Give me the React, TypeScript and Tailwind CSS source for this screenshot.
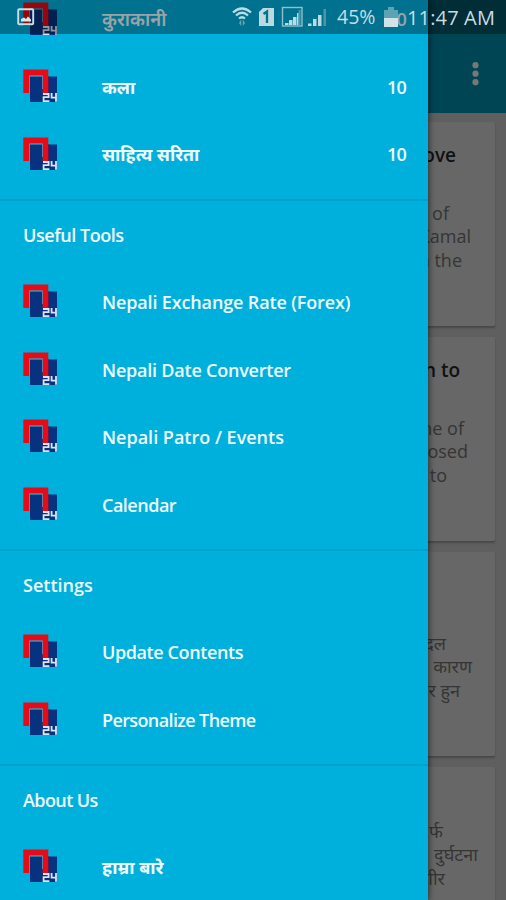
import React from "react";

const FONT = "font-['Open_Sans','Noto_Sans','Noto_Sans_Devanagari',sans-serif]";

function Logo() {
  return (
    <svg width="35" height="34" viewBox="0 0 35 34" className="shrink-0">
      <rect x="7" y="7.5" width="27" height="25.5" fill="#063280" />
      <rect x="25" y="7.5" width="1.4" height="16" fill="#2a2068" />
      <path d="M0.3 24V0.5H25.3V24.2H19.6V6.6H6.2V24Z" fill="#e80a14" />
      <path d="M6.5 24V6.9H19.5V20" fill="none" stroke="#6f84a8" strokeWidth="0.9" />
      <path d="M20 25H25.6V28.2H20.6V32.2H26.4M28.6 24V28.6H33.6M33 24V32.8" fill="none" stroke="#dfe3f6" strokeWidth="1.8" />
    </svg>
  );
}

type Item = { label: string; cls: string; count?: string };

function Row({ label, cls, count }: Item) {
  return (
    <div className="flex h-[67.5px] shrink-0 items-center pl-[23px] pr-[22px]">
      <Logo />
      <span className={`ml-[44px] whitespace-nowrap leading-6 ${cls}`}>{label}</span>
      {count && <span className="ml-auto pt-[2px] text-[18px] font-semibold tracking-[-0.8px]">{count}</span>}
    </div>
  );
}

function SectionTitle({ label, cls }: Item) {
  return (
    <div className="h-[80px] shrink-0 pt-[11px]">
      <div className="h-[2px] bg-[#00a0cb]" />
      <div className={`pl-[23px] pt-[22px] text-[18px] font-semibold leading-[24px] ${cls}`}>{label}</div>
    </div>
  );
}

const arts: Item[] = [
  { label: "कुराकानी", cls: "text-[18.5px] font-semibold", count: "10" },
  { label: "कला", cls: "pt-[1px] text-[17.8px] font-bold", count: "10" },
  { label: "साहित्य सरिता", cls: "pt-[1px] text-[17.8px] font-bold", count: "10" },
];
const tools: Item[] = [
  { label: "Nepali Exchange Rate (Forex)", cls: "pt-[2px] text-[18px] font-semibold tracking-[-0.14px]" },
  { label: "Nepali Date Converter", cls: "pt-[2px] text-[18px] font-semibold tracking-[-0.22px]" },
  { label: "Nepali Patro / Events", cls: "pt-[2px] text-[18px] font-semibold tracking-[0px]" },
  { label: "Calendar", cls: "pt-[2px] text-[18px] font-semibold tracking-[-0.5px]" },
];
const settings: Item[] = [
  { label: "Update Contents", cls: "pt-[2px] text-[18px] font-semibold tracking-[-0.4px]" },
  { label: "Personalize Theme", cls: "pt-[2px] text-[18px] font-semibold tracking-[-0.62px]" },
];

type Line = { text: string; cls: string };
type Story = { title: string; titleCls: string; lines: Line[] };

const stories: Story[] = [
  {
    title: "move", titleCls: "h-[58px] pr-[39px]",
    lines: [{ text: "of", cls: "pr-[46px]" }, { text: "Kamal", cls: "pr-[24px]" }, { text: "in the", cls: "pr-[33px]" }],
  },
  {
    title: "in to", titleCls: "h-[58px] pr-[35px]",
    lines: [{ text: "the of", cls: "pr-[31px]" }, { text: "posed", cls: "pr-[27px]" }, { text: "to", cls: "pr-[48px]" }],
  },
  {
    title: "", titleCls: "h-[58px]",
    lines: [{ text: "दल", cls: "pr-[49px]" }, { text: "कारण", cls: "pr-[23px]" }, { text: "र हुन", cls: "pr-[35px]" }],
  },
  {
    title: "", titleCls: "h-[31px]",
    lines: [{ text: "र्फ", cls: "pr-[52px]" }, { text: "दुर्घटना", cls: "pr-[17px]" }, { text: "गीर", cls: "pr-[50px]" }],
  },
];

function StoryCard({ story }: { story: Story }) {
  return (
    <div className="h-[203.5px] w-[485px] shrink-0 rounded-[2px] bg-[#676767] pt-[21px] text-right shadow-[0_2px_2px_#484848]">
      <div className={`text-[19px] font-semibold leading-[24px] text-[#111] ${story.titleCls}`}>{story.title}</div>
      {story.lines.map((l) => (
        <div key={l.text} className={`h-[23.4px] whitespace-nowrap text-[18px] leading-[24px] text-[#353535] ${l.cls}`}>{l.text}</div>
      ))}
    </div>
  );
}

function StatusBar() {
  return (
    <div className="absolute inset-x-0 top-0 z-20 flex h-[34px] items-center bg-black/35 text-[#c9dde3]">
      <svg width="18" height="20" viewBox="0 0 18 20" className="ml-[17px]">
        <rect x="1.2" y="2.2" width="15" height="15" rx="1" fill="none" stroke="#c9dde3" strokeWidth="1.9" />
        <path d="M4 14.5V12L7 10.5L9 12L11 9.5L14 12.5V14.5Z" fill="#dce5e8" />
      </svg>
      <svg width="96" height="22" viewBox="0 0 96 22" className="ml-[197px]">
        <g fill="none" stroke="#b9dce5" strokeWidth="2.2">
          <path d="M1 6.5Q10 -1.5 19 6.5M4 9.5Q10 4 16 9.5M7 12.5Q10 10 13 12.5" />
        </g>
        <path d="M7 17L9.2 13.5V20ZM13 17L10.8 20V13.5Z" fill="#66a8b9" />
        <path d="M31 2H42V20H27V6Z" fill="#bad9e1" />
        <path d="M31.5 8L35 5.5V17" fill="none" stroke="#08718a" strokeWidth="2.3" />
        <rect x="50.5" y="1.5" width="19.5" height="18.5" fill="none" stroke="#8cc0ce" strokeWidth="1.4" />
        <g fill="#b9dbe4">
          <path d="M53 17h3.5v2H53zM57 14h3.5v5H57zM61 11h3.5v8H61zM65 7h1.6v12H65zM76 17.5h3.5V20H76zM81 13h3.5v7H81zM86 9h3.5v11H86z" />
        </g>
        <path d="M66.6 4h2v15h-2zM91.5 3h2.5v17h-2.5z" fill="#4a97aa" />
      </svg>
      <span className="ml-[9px] w-[42px] whitespace-nowrap text-[19.5px] font-medium tracking-[0px]">45%</span>
      <svg width="16" height="21" viewBox="0 0 16 21" className="ml-[4px]">
        <path d="M5 0h6v3h4v8H1V3h4z" fill="#5da3b4" />
        <path d="M1 11h14v9H1z" fill="#d0e3e8" />
      </svg>
      <span className="ml-[8px] whitespace-nowrap pt-[1px] text-[20px] font-medium tracking-[0.15px]">11:47 AM</span>
    </div>
  );
}

export default function App() {
  return (
    <div className={`relative h-[900px] w-[506px] overflow-hidden bg-[#5f5f5f] ${FONT}`}>
      <div className="flex h-[113px] items-start justify-end bg-[#004554] pr-[27px] pt-[62px]">
        <svg width="7" height="24" viewBox="0 0 7 24" fill="#77777a">
          <circle cx="3.5" cy="3.2" r="3.1" />
          <circle cx="3.5" cy="11.7" r="3.1" />
          <circle cx="3.5" cy="20.2" r="3.1" />
        </svg>
      </div>
      <div className="flex flex-col gap-[11.5px] pl-[10px] pt-[9px]">
        {stories.map((s, i) => <StoryCard key={i} story={s} />)}
      </div>

      <aside className="absolute inset-y-0 left-0 z-10 w-[428px] overflow-hidden bg-[#00b0dc] text-[#f0fbff] shadow-[1px_0_6px_rgba(0,0,0,0.55)]">
        <div className="-mt-[15px] flex flex-col">
          {arts.map((a) => <Row key={a.label} {...a} />)}
          <SectionTitle label="Useful Tools" cls="tracking-[-0.45px]" />
          {tools.map((t) => <Row key={t.label} {...t} />)}
          <SectionTitle label="Settings" cls="tracking-[0px]" />
          {settings.map((t) => <Row key={t.label} {...t} />)}
          <SectionTitle label="About Us" cls="tracking-[-0.6px]" />
          <Row label="हाम्रा बारे" cls="pt-[1px] text-[18px] font-bold" />
        </div>
      </aside>

      <StatusBar />
    </div>
  );
}
